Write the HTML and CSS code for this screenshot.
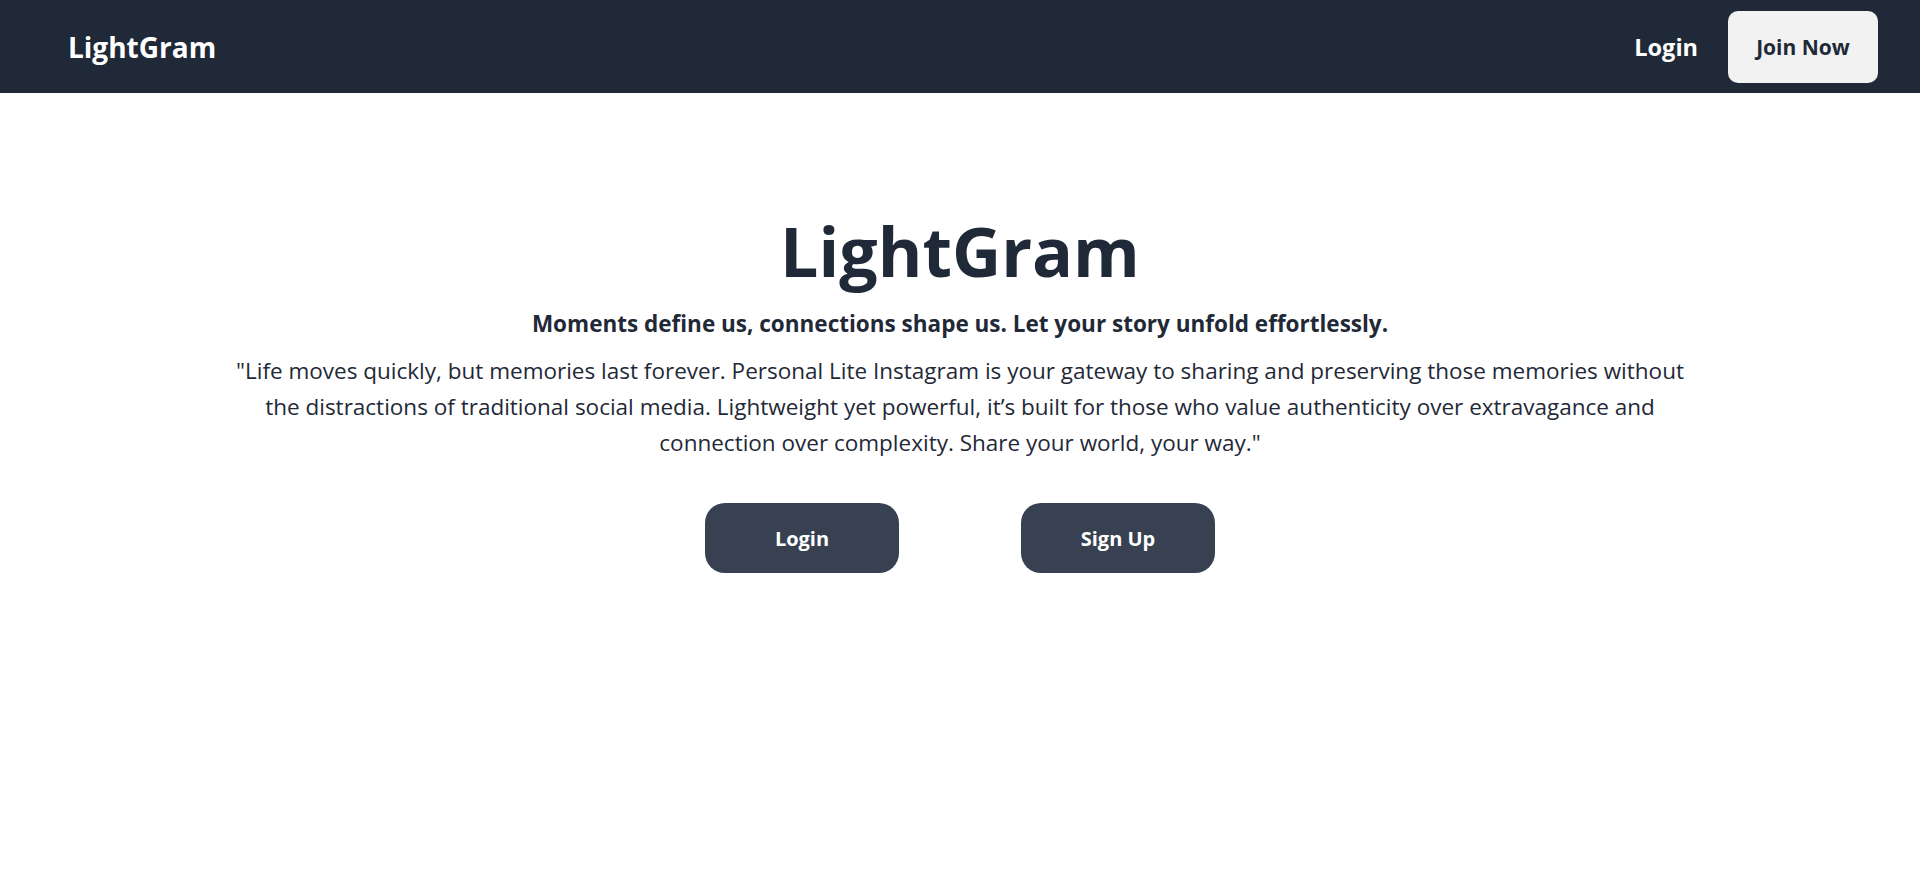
FILE: index.html
```html
<!DOCTYPE html>
<html lang="en">
<head>
<meta charset="utf-8">
<title>LightGram</title>
<link rel="stylesheet" href="styles.css">
</head>
<body>
<header class="nav">
  <a class="brand" href="#">LightGram</a>
  <div class="nav-actions">
    <a class="nav-link" href="#">Login</a>
    <a class="nav-btn" href="#">Join Now</a>
  </div>
</header>
<main class="hero">
  <h1 class="hero-title">LightGram</h1>
  <p class="hero-sub">Moments define us, connections shape us. Let your story unfold effortlessly.</p>
  <p class="hero-text">"Life moves quickly, but memories last forever. Personal Lite Instagram is your gateway to sharing and preserving those memories without the distractions of traditional social media. Lightweight yet powerful, it’s built for those who value authenticity over extravagance and connection over complexity. Share your world, your way."</p>
  <div class="hero-actions">
    <a class="hero-btn" href="#">Login</a>
    <a class="hero-btn" href="#">Sign Up</a>
  </div>
</main>
</body>
</html>
```
FILE: styles.css
```css
* { box-sizing: border-box; }
html, body { margin: 0; padding: 0; }
body {
  font-family: "Open Sans", "Noto Sans", sans-serif;
  color: #1f2937;
  background: #ffffff;
}
a { text-decoration: none; }
.nav {
  height: 93px;
  background: #1f2937;
  display: flex;
  align-items: center;
  justify-content: space-between;
  padding: 0 42px 0 68px;
}
.brand {
  color: #ffffff;
  font-weight: 700;
  font-size: 28px;
}
.nav-actions {
  display: flex;
  align-items: center;
  gap: 30px;
}
.nav-link {
  color: #ffffff;
  font-weight: 700;
  font-size: 23.5px;
}
.nav-btn {
  display: flex;
  align-items: center;
  justify-content: center;
  width: 150px;
  height: 72px;
  border-radius: 10px;
  background: #f2f2f2;
  color: #1f2937;
  font-weight: 700;
  font-size: 21px;
}
.hero {
  display: flex;
  flex-direction: column;
  align-items: center;
  padding: 124px 220px 0;
  text-align: center;
}
.hero-title {
  margin: 0;
  font-size: 68px;
  line-height: 1;
  font-weight: 700;
}
.hero-sub {
  margin: 23px 0 0;
  font-size: 22.5px;
  font-weight: 700;
}
.hero-text {
  margin: 14px 0 0;
  font-size: 22.5px;
  line-height: 36px;
}
.hero-actions {
  display: flex;
  gap: 122px;
  margin-top: 42px;
}
.hero-btn {
  display: flex;
  align-items: center;
  justify-content: center;
  width: 194px;
  height: 70px;
  border-radius: 20px;
  background: #374151;
  color: #ffffff;
  font-weight: 700;
  font-size: 20px;
}
```
